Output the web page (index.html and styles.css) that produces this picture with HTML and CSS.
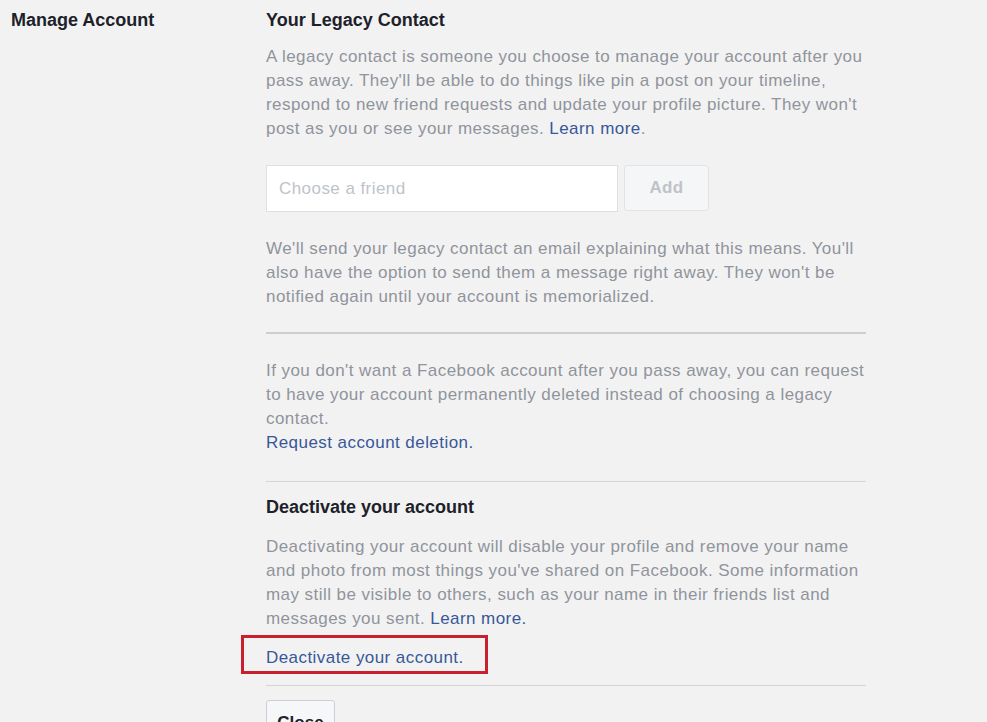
FILE: index.html
```html
<!DOCTYPE html>
<html>
<head>
<meta charset="utf-8">
<link rel="stylesheet" href="styles.css">
</head>
<body>
<div class="page">
  <div class="label">Manage Account</div>
  <div class="content">
    <h3 class="heading">Your Legacy Contact</h3>
    <p class="text first">A legacy contact is someone you choose to manage your account after you pass away. They'll be able to do things like pin a post on your timeline, respond to new friend requests and update your profile picture. They won't post as you or see your messages. <a class="link" href="#">Learn more</a>.</p>
    <div class="chooser">
      <input class="friend" type="text" placeholder="Choose a friend">
      <button class="add" type="button">Add</button>
    </div>
    <p class="text after-input">We'll send your legacy contact an email explaining what this means. You'll also have the option to send them a message right away. They won't be notified again until your account is memorialized.</p>
    <hr class="rule thick">
    <p class="text after-rule">If you don't want a Facebook account after you pass away, you can request to have your account permanently deleted instead of choosing a legacy contact.<br><a class="link" href="#">Request account deletion.</a></p>
    <hr class="rule thin">
    <h3 class="heading sub">Deactivate your account</h3>
    <p class="text deact">Deactivating your account will disable your profile and remove your name and photo from most things you've shared on Facebook. Some information may still be visible to others, such as your name in their friends list and messages you sent. <a class="link" href="#">Learn more.</a></p>
    <div class="deact-link">
      <a class="link" href="#">Deactivate your account.</a>
      <span class="highlight"></span>
    </div>
    <hr class="rule thin last">
    <button class="close" type="button">Close</button>
  </div>
</div>
</body>
</html>
```
FILE: styles.css
```css
html, body {
  margin: 0;
  padding: 0;
  background: #f2f2f2;
  height: 100%;
  overflow: hidden;
}
body {
  font-family: "Liberation Sans", Arial, sans-serif;
  color: #1d2129;
}
.page {
  display: flex;
  padding-top: 8px;
}
.label {
  width: 255px;
  padding-left: 11px;
  font-weight: bold;
  font-size: 18px;
  line-height: 24px;
}
.content {
  width: 600px;
}
.heading {
  margin: 0;
  font-size: 18px;
  line-height: 24px;
  font-weight: bold;
  color: #1d2129;
}
.text {
  margin: 0;
  font-size: 17px;
  letter-spacing: 0.44px;
  line-height: 24px;
  color: #90949c;
}
.first { margin-top: 13px; }
.link {
  color: #385898;
  text-decoration: none;
}
.chooser {
  display: flex;
  gap: 6px;
  margin-top: 24px;
}
.friend {
  box-sizing: border-box;
  width: 352px;
  height: 47px;
  margin: 0;
  border: 1px solid #dddfe2;
  background: #fff;
  padding: 0 12px;
  font-family: "Liberation Sans", Arial, sans-serif;
  font-size: 17px;
  letter-spacing: 0.44px;
  outline: none;
}
.friend::placeholder { color: #bec3c9; }
.add {
  box-sizing: border-box;
  width: 85px;
  height: 46px;
  margin: 0;
  border: 1px solid #e1e3e7;
  border-radius: 3px;
  background: #f5f6f7;
  color: #bec3c9;
  font-family: "Liberation Sans", Arial, sans-serif;
  font-weight: bold;
  font-size: 17px;
  letter-spacing: 0.3px;
  padding: 0;
}
.after-input { margin-top: 25px; }
.rule {
  border: 0;
  margin: 0;
}
.thick {
  height: 2px;
  background: #cdced0;
  margin-top: 23px;
}
.thin {
  height: 1px;
  background: #d3d4d6;
}
.after-rule { margin-top: 25px; }
.text + .thin { margin-top: 26px; }
.sub { margin-top: 13px; }
.deact { margin-top: 16px; }
.deact-link {
  position: relative;
  margin-top: 15px;
  font-size: 17px;
  letter-spacing: 0.44px;
  line-height: 24px;
}
.highlight {
  position: absolute;
  left: -25px;
  top: -11px;
  width: 247px;
  height: 39px;
  box-sizing: border-box;
  border: 3px solid #c8202f;
  pointer-events: none;
}
.last { margin-top: 15px; }
.close {
  margin-top: 14px;
  box-sizing: border-box;
  width: 69px;
  height: 46px;
  border: 1px solid #ccd0d5;
  border-radius: 3px;
  background: #f6f7f9;
  color: #1d2129;
  font-family: "Liberation Sans", Arial, sans-serif;
  font-weight: bold;
  font-size: 17px;
  padding: 0;
}
```
